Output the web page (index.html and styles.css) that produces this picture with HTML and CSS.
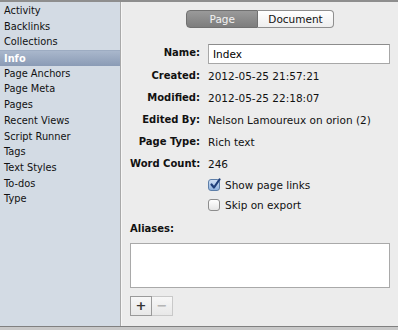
FILE: index.html
```html
<!DOCTYPE html>
<html lang="en">
<head>
    <meta charset="UTF-8">
    <title>Inspector</title>
    <link rel="stylesheet" href="styles.css">
</head>
<body>
    <div class="window">
        <ul class="sidebar">
            <li>Activity</li>
            <li>Backlinks</li>
            <li>Collections</li>
            <li class="selected">Info</li>
            <li>Page Anchors</li>
            <li>Page Meta</li>
            <li>Pages</li>
            <li>Recent Views</li>
            <li>Script Runner</li>
            <li>Tags</li>
            <li>Text Styles</li>
            <li>To-dos</li>
            <li>Type</li>
        </ul>

        <div class="panel">
            <div class="segmented">
                <span class="seg active">Page</span>
                <span class="seg">Document</span>
            </div>

            <div class="form">
                <label>Name:</label>
                <div class="field"><input type="text" value="Index"></div>

                <label>Created:</label>
                <div class="value">2012-05-25 21:57:21</div>

                <label>Modified:</label>
                <div class="value">2012-05-25 22:18:07</div>

                <label>Edited By:</label>
                <div class="value">Nelson Lamoureux on orion (2)</div>

                <label>Page Type:</label>
                <div class="value">Rich text</div>

                <label>Word Count:</label>
                <div class="value">246</div>

                <span></span>
                <div class="check"><span class="box checked">
                    <svg width="12" height="12" viewBox="0 0 12 12"><path d="M2.5 6.5 L5 9.5 L10.5 1.5" fill="none" stroke="#1f3f7a" stroke-width="2.2" stroke-linecap="round" stroke-linejoin="round"/></svg>
                </span>Show page links</div>

                <span></span>
                <div class="check"><span class="box"></span>Skip on export</div>
            </div>

            <div class="aliases-label">Aliases:</div>
            <div class="aliases"></div>

            <div class="buttons">
                <span class="btn">+</span>
                <span class="btn disabled">&minus;</span>
            </div>
        </div>
    </div>
    <div class="footer"></div>
</body>
</html>
```

FILE: styles.css
```css
/* General styling */
body {
    margin: 0;
    width: 398px;
    height: 330px;
    overflow: hidden;
    font-family: "DejaVu Sans", sans-serif;
    font-size: 10.5px;
    color: #111;
    background-color: #c8c8c8;
    border-top: 2px solid #8e8e8e;
    box-sizing: border-box;
}

.window {
    display: flex;
    height: 324px;
}

/* Sidebar list */
.sidebar {
    list-style: none;
    margin: 0;
    padding: 1px 0 0 0;
    width: 121px;
    background-color: #d3dbe4;
    border-right: 1px solid #a9a9a9;
    font-size: 9.8px;
}

.sidebar li {
    height: 15.7px;
    line-height: 16.5px;
    padding-left: 4px;
}

.sidebar li.selected {
    background: linear-gradient(#a9b7cc, #8a9bb5);
    border-top: 1px solid #9dacc2;
    color: white;
    font-weight: bold;
    height: 14.7px;
    line-height: 15.5px;
}

/* Right panel */
.panel {
    flex: 1;
    background-color: #ececec;
    border-left: 1px solid #f6f6f6;
    padding: 8px 8px 0 8px;
}

.segmented {
    display: flex;
    justify-content: center;
    margin-bottom: 13px;
}

.seg {
    height: 16px;
    line-height: 16px;
    padding: 0 10px;
    border: 1px solid #8f8f8f;
    background: linear-gradient(#ffffff, #eeeeee);
}

.seg.active {
    width: 60px;
    text-align: center;
    padding: 0 5px;
    border-radius: 4px 0 0 4px;
    background: linear-gradient(#9a9a9a, #7d7d7d);
    color: #f2f2f2;
    border-color: #707070;
}

.seg:last-child {
    border-left: none;
    border-radius: 0 4px 4px 0;
}

.form {
    display: grid;
    grid-template-columns: 70px 1fr;
    column-gap: 8px;
    align-items: center;
}

.form label {
    text-align: right;
    font-weight: bold;
    font-size: 10px;
    height: 22px;
    line-height: 22px;
    white-space: nowrap;
}

.value {
    height: 22px;
    line-height: 22px;
}

.field input {
    width: 182px;
    height: 20px;
    box-sizing: border-box;
    border: 1px solid #a7a7a7;
    border-top-color: #8c8c8c;
    padding: 0 4px;
    font-family: inherit;
    font-size: 10.5px;
    display: block;
    margin: 3px 0 1px 0;
}

.check {
    display: flex;
    align-items: center;
    height: 20px;
}

.box {
    width: 12px;
    height: 12px;
    box-sizing: border-box;
    border: 1px solid #8d8d8d;
    border-radius: 3px;
    background: linear-gradient(#ffffff, #e6e6e6);
    margin-right: 5px;
    position: relative;
}

.box svg {
    position: absolute;
    left: 0;
    top: -2px;
}

.box.checked {
    background: linear-gradient(#cfe0f5, #8fb2de);
    border-color: #5d7ea8;
}

.aliases-label {
    font-weight: bold;
    font-size: 10px;
    margin: 7px 0 7px 0;
    height: 14px;
    line-height: 14px;
}

.aliases {
    width: 258px;
    height: 43px;
    background-color: white;
    border: 1px solid #a9a9a9;
}

.buttons {
    display: flex;
    margin-top: 8px;
}

.btn {
    width: 20px;
    height: 18px;
    line-height: 18px;
    text-align: center;
    border: 1px solid #9a9a9a;
    background: linear-gradient(#f7f7f7, #e8e8e8);
    font-weight: bold;
    font-size: 13px;
    color: #333;
}

.btn.disabled {
    border-color: #c9c9c9;
    border-left: none;
    color: #b5b5b5;
}

.footer {
    height: 4px;
    border-top: 1px solid #808080;
    background-color: #c8c8c8;
}
```
